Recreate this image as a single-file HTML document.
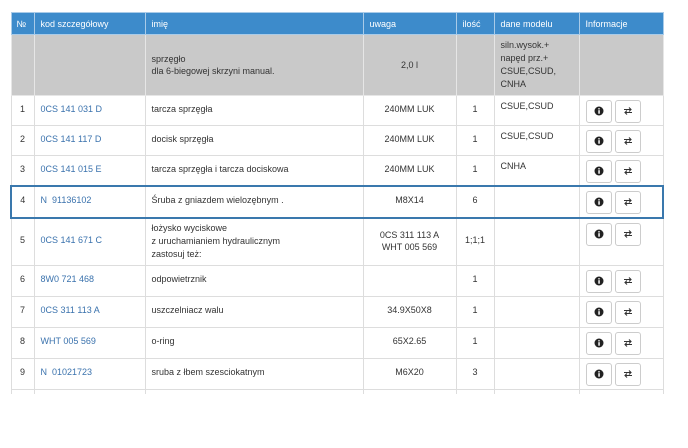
<!DOCTYPE html>
<html><head><meta charset="utf-8"><style>
body{margin:0;background:#fff;font-family:"Liberation Sans",Arial,sans-serif;font-size:9px;color:#333;width:688px;height:448px;overflow:hidden;position:relative}
table{position:absolute;left:10px;top:12px;border-collapse:collapse;table-layout:fixed;width:652px}
td,th{border:1px solid #ddd;padding:0 6px;vertical-align:top;overflow:hidden;white-space:nowrap;line-height:12px}
th{background:#3d8bcb;color:#fff;font-weight:normal;text-align:left;height:21px;border-color:#a9cbe8;vertical-align:middle;padding-top:0}
tr.g td{background:#c9c9c9;border-color:#e6e6e6}
tr td{height:30px;padding-top:7px;box-sizing:border-box}
td.c{text-align:center}
td.n{text-align:center;padding:7px 0 0}
a{color:#3a72ad;text-decoration:none}
tr.h td{border-top:2px solid #3a78ad;border-bottom:2px solid #3a78ad}
tr.h td:first-child{border-left:2px solid #3a78ad}
tr.h td:last-child{border-right:2px solid #3a78ad}
.b{display:inline-block;width:24px;height:21px;border:1px solid #ccc;border-radius:3px;margin-right:3px;vertical-align:top;position:relative;margin-top:-3px}
.b svg{position:absolute;left:7px;top:5px}
tr.e td{height:4px;padding:0;border-bottom:none}
</style></head><body>
<table>
<colgroup><col style="width:23px"><col style="width:111px"><col style="width:218px"><col style="width:93px"><col style="width:38px"><col style="width:85px"><col style="width:84px"></colgroup>
<tr><th style="padding:0 5px">№</th><th>kod szczegółowy</th><th>imię</th><th>uwaga</th><th>ilość</th><th>dane modelu</th><th>Informacje</th></tr>
<tr class="g"><td style="height:61px"></td><td></td><td style="padding-top:18px">sprzęgło<br>dla 6-biegowej skrzyni manual.</td><td class="c" style="padding-top:24px">2,0 l</td><td></td><td style="padding-top:4px;line-height:13px">siln.wysok.+<br>napęd prz.+<br>CSUE,CSUD,<br>CNHA</td><td></td></tr>
<tr><td class="n">1</td><td><a>0CS 141 031 D</a></td><td>tarcza sprzęgła</td><td class="c">240MM LUK</td><td class="c">1</td><td style="padding-top:4px">CSUE,CSUD</td><td><span class="b"><svg width="10" height="10" viewBox="0 0 10 10"><circle cx="5" cy="5" r="4.5" fill="#222"/><rect x="4.3" y="4.2" width="1.5" height="3.5" fill="#fff"/><circle cx="5" cy="2.8" r=".8" fill="#fff"/></svg></span><span class="b"><svg width="10" height="10" viewBox="0 0 10 10"><path d="M1 3.5h7M6 1.5l2 2-2 2M9 6.5H2M4 4.5l-2 2 2 2" stroke="#333" stroke-width="1.1" fill="none"/></svg></span></td></tr>
<tr><td class="n">2</td><td><a>0CS 141 117 D</a></td><td>docisk sprzęgła</td><td class="c">240MM LUK</td><td class="c">1</td><td style="padding-top:4px">CSUE,CSUD</td><td><span class="b"><svg width="10" height="10" viewBox="0 0 10 10"><circle cx="5" cy="5" r="4.5" fill="#222"/><rect x="4.3" y="4.2" width="1.5" height="3.5" fill="#fff"/><circle cx="5" cy="2.8" r=".8" fill="#fff"/></svg></span><span class="b"><svg width="10" height="10" viewBox="0 0 10 10"><path d="M1 3.5h7M6 1.5l2 2-2 2M9 6.5H2M4 4.5l-2 2 2 2" stroke="#333" stroke-width="1.1" fill="none"/></svg></span></td></tr>
<tr><td class="n">3</td><td><a>0CS 141 015 E</a></td><td>tarcza sprzęgła i tarcza dociskowa</td><td class="c">240MM LUK</td><td class="c">1</td><td style="padding-top:4px">CNHA</td><td><span class="b"><svg width="10" height="10" viewBox="0 0 10 10"><circle cx="5" cy="5" r="4.5" fill="#222"/><rect x="4.3" y="4.2" width="1.5" height="3.5" fill="#fff"/><circle cx="5" cy="2.8" r=".8" fill="#fff"/></svg></span><span class="b"><svg width="10" height="10" viewBox="0 0 10 10"><path d="M1 3.5h7M6 1.5l2 2-2 2M9 6.5H2M4 4.5l-2 2 2 2" stroke="#333" stroke-width="1.1" fill="none"/></svg></span></td></tr>
<tr class="h"><td class="n" style="height:32px">4</td><td><a>N&nbsp; 91136102</a></td><td>Śruba z gniazdem wielozębnym .</td><td class="c">M8X14</td><td class="c">6</td><td></td><td><span class="b"><svg width="10" height="10" viewBox="0 0 10 10"><circle cx="5" cy="5" r="4.5" fill="#222"/><rect x="4.3" y="4.2" width="1.5" height="3.5" fill="#fff"/><circle cx="5" cy="2.8" r=".8" fill="#fff"/></svg></span><span class="b"><svg width="10" height="10" viewBox="0 0 10 10"><path d="M1 3.5h7M6 1.5l2 2-2 2M9 6.5H2M4 4.5l-2 2 2 2" stroke="#333" stroke-width="1.1" fill="none"/></svg></span></td></tr>
<tr><td class="n" style="height:48px;padding-top:15px">5</td><td style="padding-top:15px"><a>0CS 141 671 C</a></td><td style="padding-top:3px;line-height:13px">łożysko wyciskowe<br>z uruchamianiem hydraulicznym<br>zastosuj też:</td><td class="c" style="padding-top:10px">0CS 311 113 A<br>WHT 005 569</td><td class="c" style="padding-top:15px">1;1;1</td><td></td><td><span class="b"><svg width="10" height="10" viewBox="0 0 10 10"><circle cx="5" cy="5" r="4.5" fill="#222"/><rect x="4.3" y="4.2" width="1.5" height="3.5" fill="#fff"/><circle cx="5" cy="2.8" r=".8" fill="#fff"/></svg></span><span class="b"><svg width="10" height="10" viewBox="0 0 10 10"><path d="M1 3.5h7M6 1.5l2 2-2 2M9 6.5H2M4 4.5l-2 2 2 2" stroke="#333" stroke-width="1.1" fill="none"/></svg></span></td></tr>
<tr><td class="n" style="height:31px">6</td><td><a>8W0 721 468</a></td><td>odpowietrznik</td><td class="c"></td><td class="c">1</td><td></td><td><span class="b"><svg width="10" height="10" viewBox="0 0 10 10"><circle cx="5" cy="5" r="4.5" fill="#222"/><rect x="4.3" y="4.2" width="1.5" height="3.5" fill="#fff"/><circle cx="5" cy="2.8" r=".8" fill="#fff"/></svg></span><span class="b"><svg width="10" height="10" viewBox="0 0 10 10"><path d="M1 3.5h7M6 1.5l2 2-2 2M9 6.5H2M4 4.5l-2 2 2 2" stroke="#333" stroke-width="1.1" fill="none"/></svg></span></td></tr>
<tr><td class="n" style="height:31px">7</td><td><a>0CS 311 113 A</a></td><td>uszczelniacz walu</td><td class="c">34.9X50X8</td><td class="c">1</td><td></td><td><span class="b"><svg width="10" height="10" viewBox="0 0 10 10"><circle cx="5" cy="5" r="4.5" fill="#222"/><rect x="4.3" y="4.2" width="1.5" height="3.5" fill="#fff"/><circle cx="5" cy="2.8" r=".8" fill="#fff"/></svg></span><span class="b"><svg width="10" height="10" viewBox="0 0 10 10"><path d="M1 3.5h7M6 1.5l2 2-2 2M9 6.5H2M4 4.5l-2 2 2 2" stroke="#333" stroke-width="1.1" fill="none"/></svg></span></td></tr>
<tr><td class="n" style="height:31px">8</td><td><a>WHT 005 569</a></td><td>o-ring</td><td class="c">65X2.65</td><td class="c">1</td><td></td><td><span class="b"><svg width="10" height="10" viewBox="0 0 10 10"><circle cx="5" cy="5" r="4.5" fill="#222"/><rect x="4.3" y="4.2" width="1.5" height="3.5" fill="#fff"/><circle cx="5" cy="2.8" r=".8" fill="#fff"/></svg></span><span class="b"><svg width="10" height="10" viewBox="0 0 10 10"><path d="M1 3.5h7M6 1.5l2 2-2 2M9 6.5H2M4 4.5l-2 2 2 2" stroke="#333" stroke-width="1.1" fill="none"/></svg></span></td></tr>
<tr><td class="n" style="height:31px">9</td><td><a>N&nbsp; 01021723</a></td><td>sruba z łbem szesciokatnym</td><td class="c">M6X20</td><td class="c">3</td><td></td><td><span class="b"><svg width="10" height="10" viewBox="0 0 10 10"><circle cx="5" cy="5" r="4.5" fill="#222"/><rect x="4.3" y="4.2" width="1.5" height="3.5" fill="#fff"/><circle cx="5" cy="2.8" r=".8" fill="#fff"/></svg></span><span class="b"><svg width="10" height="10" viewBox="0 0 10 10"><path d="M1 3.5h7M6 1.5l2 2-2 2M9 6.5H2M4 4.5l-2 2 2 2" stroke="#333" stroke-width="1.1" fill="none"/></svg></span></td></tr>
<tr class="e"><td></td><td></td><td></td><td></td><td></td><td></td><td></td></tr>
</table>
</body></html>
